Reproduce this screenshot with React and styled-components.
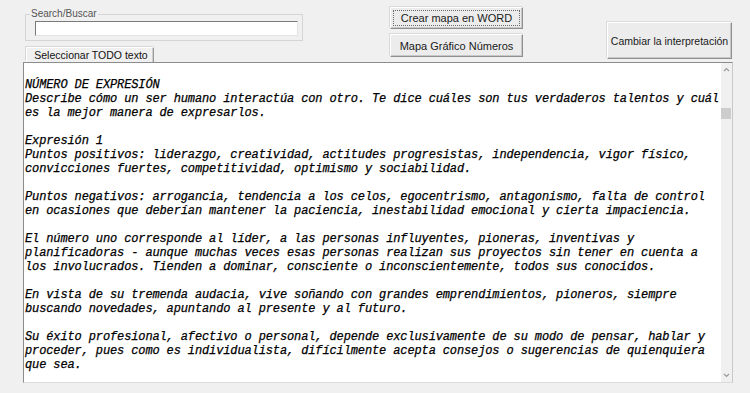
import React from 'react'
import styled, { createGlobalStyle } from 'styled-components';

const Global = createGlobalStyle`
    html, body {
        margin: 0;
        padding: 0;
        background: #f0f0f0;
    }
    body {
        font-family: "Liberation Sans", Arial, sans-serif;
    }
`;

const Window = styled.div`
    width: 750px;
    height: 393px;
    overflow: hidden;
    background: #f0f0f0;
`;

const TopRow = styled.div`
    display: flex;
    align-items: flex-start;
    padding: 7px 0 0 25px;
    height: 55px;
`;

const LeftCol = styled.div`
    display: flex;
    flex-direction: column;
    align-items: flex-start;
    width: 278px;
`;

const Frame = styled.fieldset`
    box-sizing: border-box;
    width: 278px;
    margin: 1px 0 0 0;
    padding: 1px 4px 4px 9px;
    border: 1px solid #d5d5d5;
    min-width: 0;
`;

const Legend = styled.legend`
    margin-left: -5px;
    padding: 0 1px;
    font-size: 10px;
    line-height: 12px;
    color: #555;
`;

const SearchInput = styled.input`
    display: block;
    box-sizing: border-box;
    width: 263px;
    height: 15px;
    margin: 0;
    padding: 0 2px;
    border: 1px solid;
    border-color: #7a7a7a #e3e3e3 #e3e3e3 #7a7a7a;
    background: #fff;
    outline: none;
`;

const TabButton = styled.button`
    box-sizing: border-box;
    margin: 6px 0 0 1px;
    width: 128px;
    height: 15px;
    padding: 0 0 0 2px;
    border: 1px solid #9a9a9a;
    border-bottom: none;
    border-left-color: #fff;
    border-top-color: #fff;
    box-shadow: inset -1px 0 0 #cfcfcf, -1px -1px 0 #d8d8d8;
    background: #f0f0f0;
    font-family: "Liberation Sans", Arial, sans-serif;
    font-size: 10.5px;
    line-height: 13px;
    color: #111;
`;

const MidCol = styled.div`
    display: flex;
    flex-direction: column;
    gap: 5px;
    margin-left: 87px;
    width: 133px;
`;

const Button = styled.button`
    box-sizing: border-box;
    width: ${p => p.w || 133}px;
    height: ${p => p.h || 22}px;
    margin: 0;
    padding: 0;
    border: 1px solid;
    border-color: #ffffff #8f8f8f #8f8f8f #ffffff;
    box-shadow: inset -1px -1px 0 #c8c8c8, -1px -1px 0 #dadada;
    background: #ececec;
    font-family: "Liberation Sans", Arial, sans-serif;
    font-size: ${p => p.fs || 11}px;
    color: #1a1a1a;
    outline: ${p => (p.focused ? '1px dotted #6a6a6a' : 'none')};
    outline-offset: -4px;
`;

const RightCol = styled.div`
    margin-left: 84px;
    margin-top: 15px;
`;

const TextBox = styled.div`
    box-sizing: border-box;
    display: flex;
    width: 710px;
    height: 321px;
    margin-left: 23px;
    border: 1px solid #8c8c8c;
    border-right-color: #c8c8c8;
    border-bottom-color: #dcdcdc;
    background: #fff;
`;

const Content = styled.div`
    flex: 1;
    padding: 15px 0 0 1px;
    font-family: "Liberation Mono", "Courier New", monospace;
    font-weight: normal;
    font-style: italic;
    font-size: 12px;
    letter-spacing: -0.12px;
    line-height: 14px;
    color: #000;
    white-space: pre;
    overflow: hidden;
    -webkit-text-stroke: 0.25px #000;
`;

const ScrollBar = styled.div`
    width: 11px;
    display: flex;
    flex-direction: column;
    align-items: center;
    background: #f0f0f0;
`;

const Arrow = styled.div`
    height: 13px;
    display: flex;
    align-items: center;
    justify-content: center;
`;

const Track = styled.div`
    flex: 1;
    width: 100%;
    padding-top: 32px;
`;

const Thumb = styled.div`
    width: 10px;
    height: 11px;
    background: #cdcdcd;
`;

const Chevron = ({ down }) => (
    <svg width="7" height="5" viewBox="0 0 7 5">
        <path
            d={down ? 'M1 1 L3.5 3.5 L6 1' : 'M1 4 L3.5 1.5 L6 4'}
            fill="none"
            stroke="#9a9a9a"
            strokeWidth="1.2"
        />
    </svg>
);

const text = [
    'NÚMERO DE EXPRESIÓN',
    'Describe cómo un ser humano interactúa con otro. Te dice cuáles son tus verdaderos talentos y cuál',
    'es la mejor manera de expresarlos.',
    '',
    'Expresión 1',
    'Puntos positivos: liderazgo, creatividad, actitudes progresistas, independencia, vigor físico,',
    'convicciones fuertes, competitividad, optimismo y sociabilidad.',
    '',
    'Puntos negativos: arrogancia, tendencia a los celos, egocentrismo, antagonismo, falta de control',
    'en ocasiones que deberían mantener la paciencia, inestabilidad emocional y cierta impaciencia.',
    '',
    'El número uno corresponde al líder, a las personas influyentes, pioneras, inventivas y',
    'planificadoras - aunque muchas veces esas personas realizan sus proyectos sin tener en cuenta a',
    'los involucrados. Tienden a dominar, consciente o inconscientemente, todos sus conocidos.',
    '',
    'En vista de su tremenda audacia, vive soñando con grandes emprendimientos, pioneros, siempre',
    'buscando novedades, apuntando al presente y al futuro.',
    '',
    'Su éxito profesional, afectivo o personal, depende exclusivamente de su modo de pensar, hablar y',
    'proceder, pues como es individualista, difícilmente acepta consejos o sugerencias de quienquiera',
    'que sea.',
].join('\n');

const App = () => {
    return (
        <Window>
            <Global />
            <TopRow>
                <LeftCol>
                    <Frame>
                        <Legend>Search/Buscar</Legend>
                        <SearchInput />
                    </Frame>
                    <TabButton>Seleccionar TODO texto</TabButton>
                </LeftCol>
                <MidCol>
                    <Button h={22} focused>Crear mapa en WORD</Button>
                    <Button h={23}>Mapa Gráfico Números</Button>
                </MidCol>
                <RightCol>
                    <Button w={125} h={37} fs={10.5}>Cambiar la interpretación</Button>
                </RightCol>
            </TopRow>
            <TextBox>
                <Content>{text}</Content>
                <ScrollBar>
                    <Arrow><Chevron /></Arrow>
                    <Track><Thumb /></Track>
                    <Arrow><Chevron down /></Arrow>
                </ScrollBar>
            </TextBox>
        </Window>
    )
}

export default App;
